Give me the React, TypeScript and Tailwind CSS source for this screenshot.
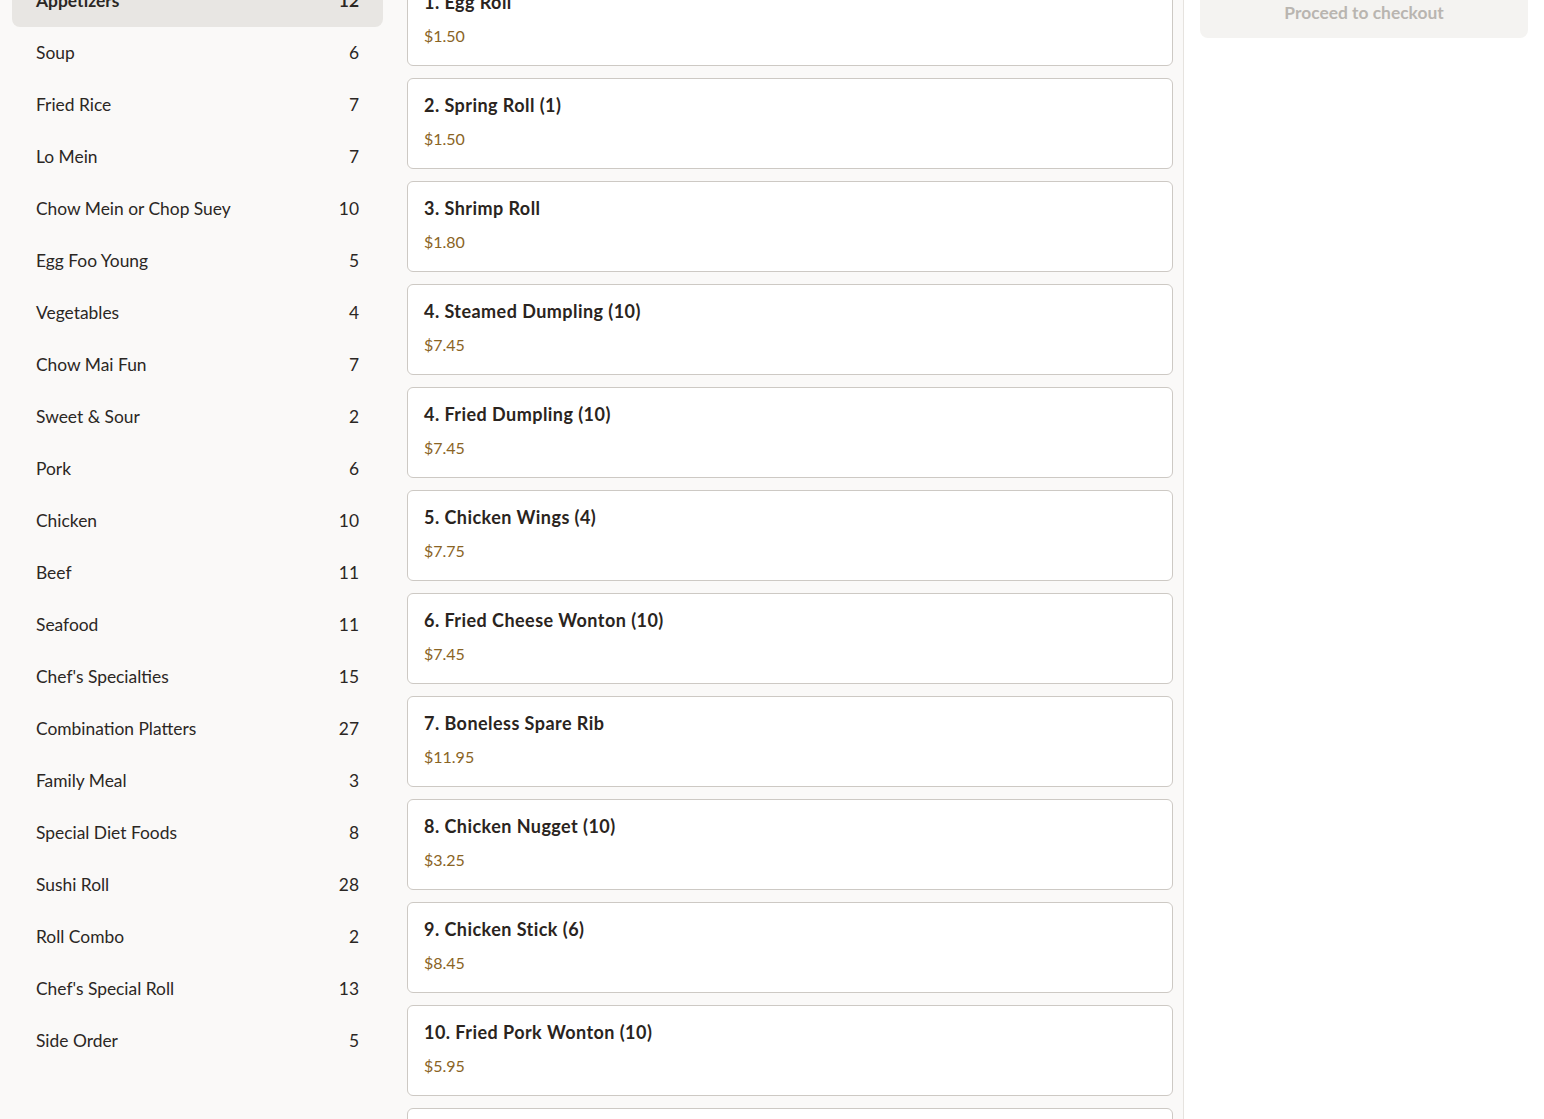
import React from "react";

const categories: [string, number][] = [
  ["Appetizers", 12],
  ["Soup", 6],
  ["Fried Rice", 7],
  ["Lo Mein", 7],
  ["Chow Mein or Chop Suey", 10],
  ["Egg Foo Young", 5],
  ["Vegetables", 4],
  ["Chow Mai Fun", 7],
  ["Sweet & Sour", 2],
  ["Pork", 6],
  ["Chicken", 10],
  ["Beef", 11],
  ["Seafood", 11],
  ["Chef's Specialties", 15],
  ["Combination Platters", 27],
  ["Family Meal", 3],
  ["Special Diet Foods", 8],
  ["Sushi Roll", 28],
  ["Roll Combo", 2],
  ["Chef's Special Roll", 13],
  ["Side Order", 5],
];

const items: [string, string][] = [
  ["1. Egg Roll", "$1.50"],
  ["2. Spring Roll (1)", "$1.50"],
  ["3. Shrimp Roll", "$1.80"],
  ["4. Steamed Dumpling (10)", "$7.45"],
  ["4. Fried Dumpling (10)", "$7.45"],
  ["5. Chicken Wings (4)", "$7.75"],
  ["6. Fried Cheese Wonton (10)", "$7.45"],
  ["7. Boneless Spare Rib", "$11.95"],
  ["8. Chicken Nugget (10)", "$3.25"],
  ["9. Chicken Stick (6)", "$8.45"],
  ["10. Fried Pork Wonton (10)", "$5.95"],
  ["11. Crab Rangoon (8)", "$6.95"],
];

export default function App() {
  return (
    <div
      className="h-screen overflow-hidden bg-[#faf9f8] text-[#2b2724]"
      style={{ fontFamily: "Lato, 'Noto Sans', sans-serif" }}
    >
      <div className="-mt-[40px] flex min-h-[1200px]">
        <aside className="w-[395px] shrink-0 px-3 pt-[15px]">
          {categories.map(([name, count], i) => (
            <div
              key={name}
              className={
                "flex h-[52px] items-center justify-between rounded-lg px-6 text-[17.4px] " +
                (i === 0 ? "bg-[#e8e6e3] font-bold" : "")
              }
            >
              <span>{name}</span>
              <span>{count}</span>
            </div>
          ))}
        </aside>
        <main className="w-[789px] shrink-0 border-r border-[#e6e3df] pl-3 pr-[10px] pt-[15px]">
          <div className="flex flex-col gap-3">
            {items.map(([name, price]) => (
              <div
                key={name}
                className="h-[91px] rounded-md border border-[#cdc9c4] bg-white px-4 pt-4"
              >
                <div className="text-[18px] font-bold leading-[21px] tracking-[0.45px] text-[#2a2420]">
                  {name}
                </div>
                <div className="mt-[13px] text-[16px] leading-[20px] text-[#8a6424]">{price}</div>
              </div>
            ))}
          </div>
        </main>
        <section className="flex-1 bg-white px-4 pt-[28px]">
          <div className="flex h-[50px] items-center justify-center rounded-lg bg-[#f4f3f1] text-[17.4px] font-bold text-[#b9b5b0]">
            Proceed to checkout
          </div>
        </section>
      </div>
    </div>
  );
}
